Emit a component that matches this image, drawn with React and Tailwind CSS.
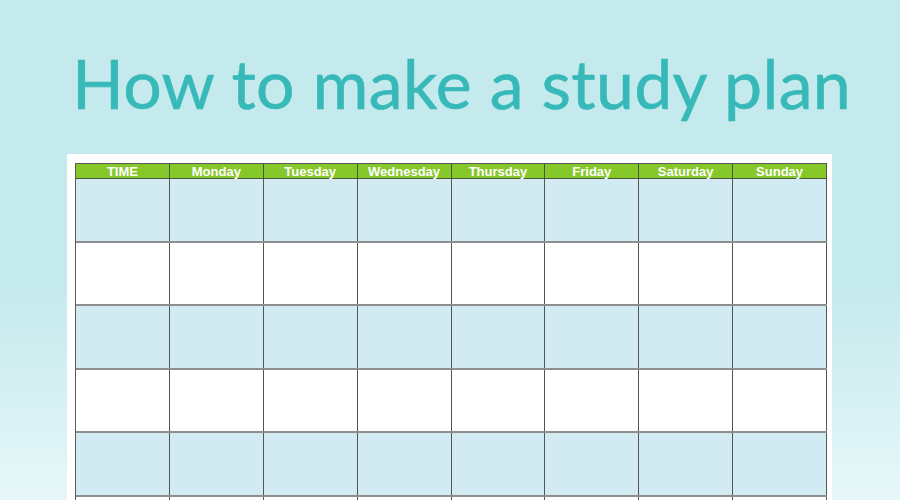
const days = ["TIME", "Monday", "Tuesday", "Wednesday", "Thursday", "Friday", "Saturday", "Sunday"];
const rows = [0, 1, 2, 3, 4, 5];

export default function App() {
    return (
        <div className="w-[900px] h-[500px] overflow-hidden bg-[linear-gradient(to_bottom,#c5eaed_0%,#c5eaed_58%,#e7f7f9_100%)]">
            <h1
                className="pl-[72px] pt-[42px] h-[154px] text-[68px] leading-[1.2] text-[#38b9b9] tracking-[0.3px] [-webkit-text-stroke:0.6px_#38b9b9]"
                style={{fontFamily: "Lato, 'Open Sans', sans-serif"}}
            >
                How to make a study plan
            </h1>
            <div className="ml-[67px] w-[765px] h-[400px] bg-white pt-[9px] pl-[8px] pr-[5px]">
                <div className="w-[752px] border-l border-t border-[#5a5a5a]">
                    <div className="flex h-[15px] bg-[#86c82a] border-b border-[#4d5a3a]">
                        {days.map((d) => (
                            <div
                                key={d}
                                className="w-[94px] border-r border-[#4d5a3a] flex items-center justify-center text-white text-[13px] font-bold leading-none"
                                style={{fontFamily: "'Liberation Sans', Arial, sans-serif"}}
                            >
                                {d}
                            </div>
                        ))}
                    </div>
                    {rows.map((r) => (
                        <div
                            key={r}
                            className={
                                r % 2 === 0
                                    ? "flex h-[64px] bg-[#d2eaf1] border-b-2 border-[#8e8e8e]"
                                    : "flex h-[63px] bg-white border-b-2 border-[#8e8e8e]"
                            }
                        >
                            {days.map((d) => (
                                <div key={d} className="w-[94px] border-r border-[#555]"/>
                            ))}
                        </div>
                    ))}
                </div>
            </div>
        </div>
    );
}
